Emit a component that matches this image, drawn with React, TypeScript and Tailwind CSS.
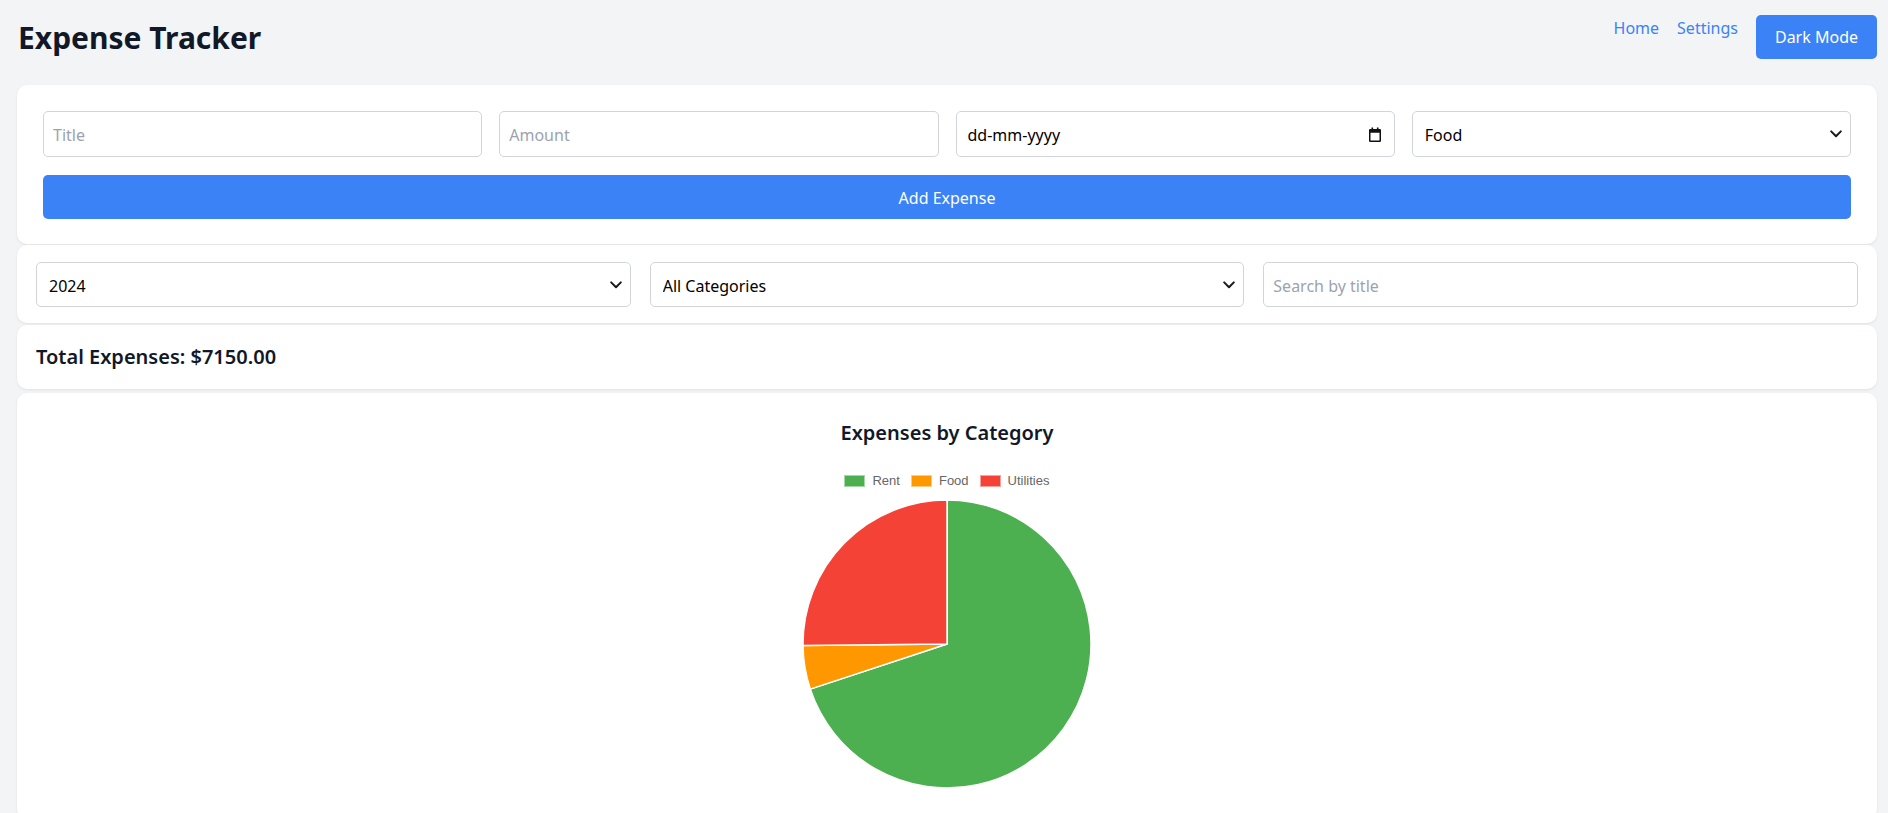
import React from "react";

function Chevron() {
  return (
    <svg
      className="pointer-events-none absolute right-[9px] top-1/2 -translate-y-1/2"
      width="12"
      height="8"
      viewBox="0 0 12 8"
      fill="none"
    >
      <polyline points="1.2,1.4 6,6.2 10.8,1.4" stroke="#1a1a1a" strokeWidth="2" strokeLinecap="round" strokeLinejoin="round" />
    </svg>
  );
}

function CalendarIcon() {
  return (
    <svg width="14" height="15" viewBox="0 0 14 15" fill="none">
      <rect x="1.75" y="2.75" width="10.5" height="11.5" rx="0.5" stroke="#111" strokeWidth="1.5" />
      <rect x="1.75" y="2.75" width="10.5" height="3" fill="#111" />
      <rect x="3.5" y="0.5" width="1.6" height="3" fill="#111" />
      <rect x="8.9" y="0.5" width="1.6" height="3" fill="#111" />
    </svg>
  );
}

const fieldBase =
  "w-full rounded-[5px] border border-[#d1d5db] bg-white text-[16px] text-black outline-none";

function SelectField({ value, options, height }: { value: string; options: string[]; height: string }) {
  return (
    <div className="relative">
      <select
        defaultValue={value}
        className={`${fieldBase} ${height} appearance-none pl-[12px] pr-[30px] pt-[2px]`}
      >
        {options.map((o) => (
          <option key={o} value={o}>
            {o}
          </option>
        ))}
      </select>
      <Chevron />
    </div>
  );
}

export default function App() {
  const cx = 145;
  const cy = 145;
  const r = 144;
  return (
    <div className="min-h-screen bg-[#f3f4f6] pl-[17px] pr-[11px] font-['Noto_Sans',sans-serif] text-[#111827]">
      <header className="flex items-start justify-between pt-[15px] pb-[26px]">
        <h1 className="ml-[1px] mt-[5px] text-[30px] font-bold leading-[36px] text-[#111827]">Expense Tracker</h1>
        <nav className="flex items-start gap-[18px]">
          <a className="mt-[1px] cursor-pointer text-[16px] leading-[24px] text-[#3b82f6]">Home</a>
          <a className="mt-[1px] cursor-pointer text-[16px] leading-[24px] text-[#3b82f6]">Settings</a>
          <button className="h-[44px] rounded-[5px] bg-[#3b82f6] px-[19px] text-[16px] leading-[24px] text-white">
            Dark Mode
          </button>
        </nav>
      </header>

      <section className="rounded-[10px] bg-white px-[26px] pt-[26px] pb-[25px] shadow-[0_1px_3px_rgba(0,0,0,0.08)]">
        <div className="grid grid-cols-4 gap-[17px]">
          <input
            placeholder="Title"
            className={`${fieldBase} h-[46px] px-[9px] pt-[2px] placeholder:text-[#9ca3af]`}
          />
          <input
            placeholder="Amount"
            className={`${fieldBase} h-[46px] px-[9px] pt-[2px] placeholder:text-[#9ca3af]`}
          />
          <div className={`${fieldBase} flex h-[46px] items-center justify-between pl-[11px] pr-[12px]`}>
            <span className="pt-[2px]">dd-mm-yyyy</span>
            <CalendarIcon />
          </div>
          <SelectField value="Food" options={["Food", "Rent", "Utilities"]} height="h-[46px]" />
        </div>
        <button className="mt-[18px] h-[44px] w-full rounded-[5px] bg-[#3b82f6] pt-[1px] text-[16px] text-white">
          Add Expense
        </button>
      </section>

      <section className="mt-[1px] rounded-[10px] bg-white px-[19px] pt-[17px] pb-[16px] shadow-[0_1px_3px_rgba(0,0,0,0.08)]">
        <div className="grid grid-cols-3 gap-[19px]">
          <SelectField value="2024" options={["2024", "2023", "2022"]} height="h-[45px]" />
          <SelectField
            value="All Categories"
            options={["All Categories", "Food", "Rent", "Utilities"]}
            height="h-[45px]"
          />
          <input
            placeholder="Search by title"
            className={`${fieldBase} h-[45px] px-[9px] pt-[2px] placeholder:text-[#9ca3af]`}
          />
        </div>
      </section>

      <section className="mt-[2px] rounded-[10px] bg-white px-[19px] pt-[18px] pb-[18px] shadow-[0_1px_3px_rgba(0,0,0,0.08)]">
        <h2 className="text-[20px] font-semibold leading-[28px] text-[#111827]">Total Expenses: $7150.00</h2>
      </section>

      <section className="mt-[4px] flex flex-col items-center rounded-[10px] bg-white pt-[26px] pb-[30px] shadow-[0_1px_3px_rgba(0,0,0,0.08)]">
        <h3 className="text-[20px] font-semibold leading-[28px] text-[#111827]">Expenses by Category</h3>
        <div className="mt-[26px] flex h-[16px] items-center gap-[11px] font-['Liberation_Sans',Arial,sans-serif] text-[13px] text-[#666666]">
          <div className="flex items-center gap-[7px]">
            <span className="block h-[12px] w-[21px] border border-white/50 bg-[#4caf50]" />
            <span>Rent</span>
          </div>
          <div className="flex items-center gap-[7px]">
            <span className="block h-[12px] w-[21px] border border-white/50 bg-[#ff9800]" />
            <span>Food</span>
          </div>
          <div className="flex items-center gap-[7px]">
            <span className="block h-[12px] w-[21px] border border-white/50 bg-[#f44336]" />
            <span>Utilities</span>
          </div>
        </div>
        <svg className="mt-[10px]" width="290" height="290" viewBox="0 0 290 290">
          <path
            d={`M${cx},${cy} L${cx},${cy - r} A${r},${r} 0 1 1 8.245,190.1 Z`}
            fill="#4caf50"
            stroke="#ffffff"
            strokeWidth="1.5"
            strokeLinejoin="round"
          />
          <path
            d={`M${cx},${cy} L8.245,190.1 A${r},${r} 0 0 1 1.009,146.583 Z`}
            fill="#ff9800"
            stroke="#ffffff"
            strokeWidth="1.5"
            strokeLinejoin="round"
          />
          <path
            d={`M${cx},${cy} L1.009,146.583 A${r},${r} 0 0 1 ${cx},${cy - r} Z`}
            fill="#f44336"
            stroke="#ffffff"
            strokeWidth="1.5"
            strokeLinejoin="round"
          />
        </svg>
      </section>
    </div>
  );
}
